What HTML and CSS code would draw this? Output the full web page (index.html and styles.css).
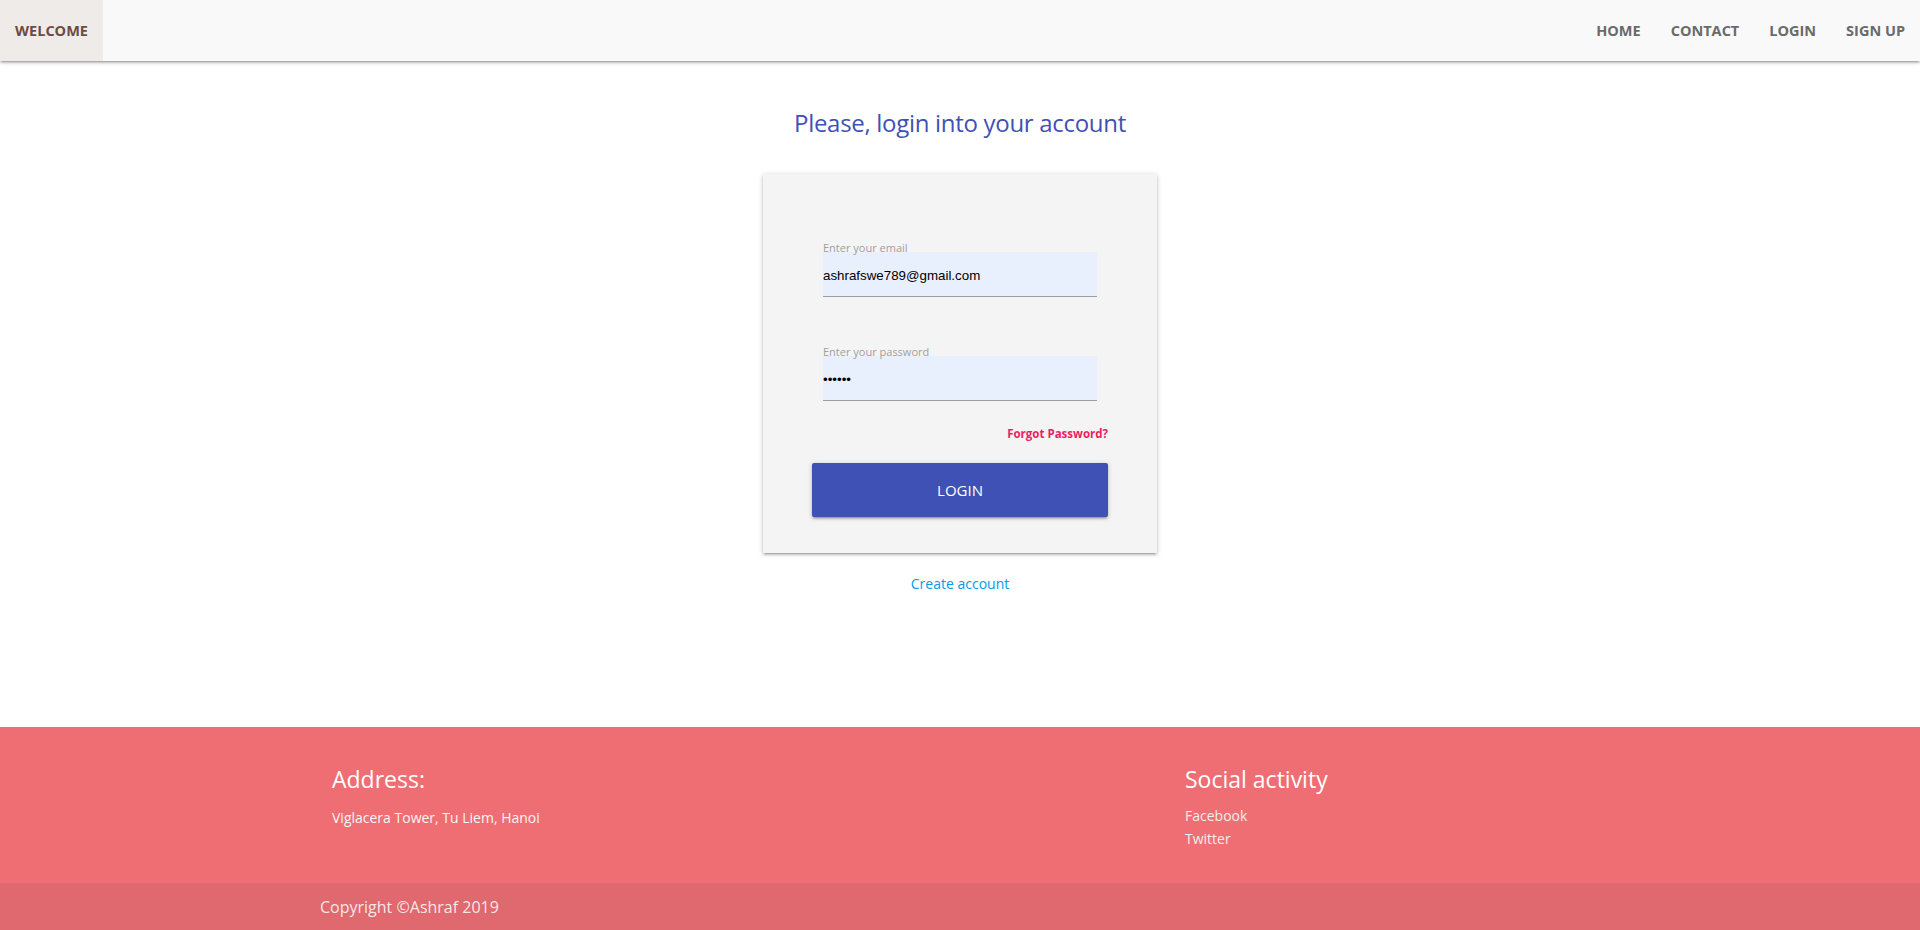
FILE: index.html
```html
<!DOCTYPE html>
<html lang="en">
<head>
<meta charset="utf-8">
<title>Login</title>
<link rel="stylesheet" href="styles.css">
</head>
<body>
<nav class="navbar">
  <a class="brand" href="#">WELCOME</a>
  <ul class="nav-links">
    <li><a href="#">HOME</a></li>
    <li><a href="#">CONTACT</a></li>
    <li><a href="#">LOGIN</a></li>
    <li><a href="#">SIGN UP</a></li>
  </ul>
</nav>
<main class="main">
  <h1 class="title">Please, login into your account</h1>
  <form class="card">
    <div class="field">
      <label class="field-label" for="email">Enter your email</label>
      <input class="field-input" id="email" type="email" value="ashrafswe789@gmail.com">
    </div>
    <div class="field field-second">
      <label class="field-label" for="password">Enter your password</label>
      <input class="field-input" id="password" type="password" value="123456">
    </div>
    <div class="forgot-row"><a class="forgot" href="#">Forgot Password?</a></div>
    <button class="login-btn" type="button">LOGIN</button>
  </form>
  <a class="create" href="#">Create account</a>
</main>
<footer class="footer">
  <div class="footer-inner">
    <div class="footer-col">
      <h5 class="footer-title">Address:</h5>
      <p class="footer-text">Viglacera Tower, Tu Liem, Hanoi</p>
    </div>
    <div class="footer-col">
      <h5 class="footer-title">Social activity</h5>
      <ul class="footer-links">
        <li><a href="#">Facebook</a></li>
        <li><a href="#">Twitter</a></li>
      </ul>
    </div>
  </div>
  <div class="copyright">
    <div class="copyright-inner">Copyright ©Ashraf 2019</div>
  </div>
</footer>
</body>
</html>
```

FILE: styles.css
```css
* { box-sizing: border-box; }
html, body { margin: 0; padding: 0; }
body {
  font-family: "Open Sans", "Noto Sans", sans-serif;
  background: #fff;
  min-height: 930px;
  display: flex;
  flex-direction: column;
  overflow: hidden;
}
a { text-decoration: none; }

.navbar {
  height: 61px;
  background: #f9f9f9;
  display: flex;
  justify-content: space-between;
  align-items: stretch;
  box-shadow: 0 2px 2px 0 rgba(0,0,0,0.14), 0 3px 1px -2px rgba(0,0,0,0.12), 0 1px 5px 0 rgba(0,0,0,0.2);
  position: relative;
  z-index: 2;
}
.brand {
  width: 103px;
  background: #efebe9;
  color: #6d4c41;
  font-weight: 700;
  font-size: 14.5px;
  display: flex;
  align-items: center;
  justify-content: center;
}
.nav-links {
  list-style: none;
  margin: 0;
  padding: 0;
  display: flex;
}
.nav-links a {
  display: flex;
  align-items: center;
  height: 61px;
  padding: 0 15px;
  color: #6a6a6a;
  font-weight: 700;
  font-size: 14.5px;
}

.main {
  flex: 1;
  display: flex;
  flex-direction: column;
  align-items: center;
}
.title {
  margin: 44px 0 0;
  font-weight: 400;
  font-size: 24px;
  line-height: 36px;
  color: #3f51b5;
  letter-spacing: -0.3px;
}
.card {
  margin-top: 33px;
  width: 394px;
  height: 379px;
  background: #f4f4f4;
  padding: 67px 49px 36px;
  display: flex;
  flex-direction: column;
  box-shadow: 0 2px 2px 0 rgba(0,0,0,0.14), 0 3px 1px -2px rgba(0,0,0,0.12), 0 1px 5px 0 rgba(0,0,0,0.2);
}
.field {
  padding: 0 11px;
  display: flex;
  flex-direction: column;
}
.field-second { margin-top: 48px; }
.field-label {
  font-size: 11px;
  line-height: 14px;
  color: #9e9e9e;
  margin-bottom: -3px;
  position: relative;
  z-index: 1;
  align-self: flex-start;
}
.field-input {
  height: 45px;
  border: none;
  border-bottom: 1px solid #9e9e9e;
  background: #e8f0fe;
  font-family: "Liberation Sans", Arial, sans-serif;
  font-size: 13.33px;
  color: #000;
  padding: 2px 0 0;
  outline: none;
  width: 100%;
}
.forgot-row {
  margin-top: 26px;
  display: flex;
  justify-content: flex-end;
  line-height: 14px;
}
.forgot {
  color: #e91e63;
  font-size: 11.5px;
  font-weight: 700;
}
.login-btn {
  margin-top: 22px;
  height: 54px;
  width: 100%;
  border: none;
  border-radius: 2px;
  background: #3f51b5;
  color: #fff;
  font-family: "Open Sans", "Noto Sans", sans-serif;
  font-size: 15px;
  box-shadow: 0 2px 2px 0 rgba(0,0,0,0.14), 0 3px 1px -2px rgba(0,0,0,0.12), 0 1px 5px 0 rgba(0,0,0,0.2);
}
.create {
  margin-top: 21px;
  color: #039be5;
  font-size: 14px;
  line-height: 20px;
}

.footer {
  background: #ee6e73;
  color: #fff;
}
.footer-inner {
  height: 156px;
  display: grid;
  grid-template-columns: 853px 1fr;
  padding: 37px 0 0 332px;
}
.footer-title {
  margin: 0;
  font-weight: 400;
  font-size: 23px;
  line-height: 30px;
}
.footer-text {
  margin: 13px 0 0;
  font-size: 14px;
  line-height: 22px;
  color: #f5f5f5;
}
.footer-links {
  list-style: none;
  margin: 10px 0 0;
  padding: 0;
}
.footer-links li { line-height: 22px; }
.footer-links a {
  color: #eeeeee;
  font-size: 14px;
}
.copyright {
  height: 47px;
  background: rgba(51,51,51,0.08);
  display: flex;
  align-items: center;
}
.copyright-inner {
  padding-left: 320px;
  font-size: 16px;
  color: rgba(255,255,255,0.85);
}
```
